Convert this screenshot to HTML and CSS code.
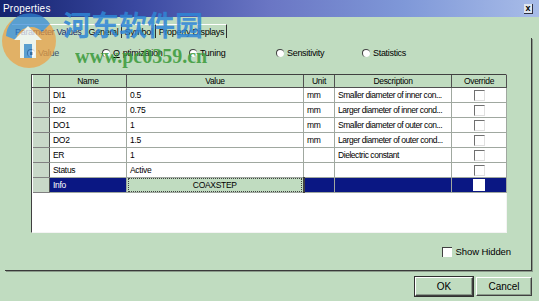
FILE: index.html
```html
<!DOCTYPE html>
<html lang="en">
    <head>
        <meta charset="UTF-8" />
        <title>Properties</title>
        <link rel="stylesheet" href="styles.css">
    </head>
    <body>
        <div class="window">
            <!-- title bar -->
            <div class="titlebar">
                <span class="title">Properties</span>
                <span class="close">x</span>
            </div>

            <!-- tabs -->
            <div class="tabs">
                <span class="tab on">Parameter Values</span>
                <span class="tab">General</span>
                <span class="tab">Symbol</span>
                <span class="tab">Property Displays</span>
            </div>

            <div class="panel">
                <div class="modes">
                    <label class="radio on"><i></i>Value</label>
                    <label class="radio"><i></i><u>O</u>ptimization</label>
                    <label class="radio"><i></i>Tuning</label>
                    <label class="radio"><i></i>Sensitivity</label>
                    <label class="radio"><i></i>Statistics</label>
                </div>

                <div class="gridbox">
                    <table class="grid">
                        <colgroup>
                            <col style="width:17px">
                            <col style="width:77px">
                            <col style="width:177px">
                            <col style="width:31px">
                            <col style="width:117px">
                            <col style="width:55px">
                        </colgroup>
                        <thead>
                            <tr>
                                <th></th>
                                <th>Name</th>
                                <th>Value</th>
                                <th>Unit</th>
                                <th>Description</th>
                                <th>Override</th>
                            </tr>
                        </thead>
                        <tbody>
                            <tr>
                                <th></th>
                                <td>DI1</td>
                                <td>0.5</td>
                                <td>mm</td>
                                <td class="desc">Smaller diameter of inner con...</td>
                                <td class="ovr"><span class="box"></span></td>
                            </tr>
                            <tr>
                                <th></th>
                                <td>DI2</td>
                                <td>0.75</td>
                                <td>mm</td>
                                <td class="desc">Larger diameter of inner cond...</td>
                                <td class="ovr"><span class="box"></span></td>
                            </tr>
                            <tr>
                                <th></th>
                                <td>DO1</td>
                                <td>1</td>
                                <td>mm</td>
                                <td class="desc">Smaller diameter of outer con...</td>
                                <td class="ovr"><span class="box"></span></td>
                            </tr>
                            <tr>
                                <th></th>
                                <td>DO2</td>
                                <td>1.5</td>
                                <td>mm</td>
                                <td class="desc">Larger diameter of outer cond...</td>
                                <td class="ovr"><span class="box"></span></td>
                            </tr>
                            <tr>
                                <th></th>
                                <td>ER</td>
                                <td>1</td>
                                <td></td>
                                <td class="desc">Dielectric constant</td>
                                <td class="ovr"><span class="box"></span></td>
                            </tr>
                            <tr>
                                <th></th>
                                <td>Status</td>
                                <td>Active</td>
                                <td></td>
                                <td></td>
                                <td class="ovr"><span class="box"></span></td>
                            </tr>
                            <tr class="sel">
                                <th></th>
                                <td>Info</td>
                                <td class="cellbtn"><span>COAXSTEP</span></td>
                                <td></td>
                                <td></td>
                                <td class="ovr"><span class="box"></span></td>
                            </tr>
                        </tbody>
                    </table>
                </div>

                <div class="hiddenrow">
                    <label class="check"><i></i>Show Hidden</label>
                </div>
            </div>

            <div class="buttons">
                <button class="btn def">OK</button>
                <button class="btn">Cancel</button>
            </div>

            <!-- watermark over the dialog -->
            <div class="mark">
                <svg class="logo" width="60" height="60" viewBox="0 0 60 60">
                    <circle cx="29" cy="31" r="27" fill="#f0a040"/>
                    <path d="M6 26 A24 24 0 0 1 50 14 L42 22 A15 15 0 0 0 16 30 Z" fill="#2f86d6"/>
                    <path d="M20 48 L20 30 L14 30 L28 16 L42 30 L36 30 L36 48 Z" fill="#fff"/>
                    <path d="M24 48 L24 34 L32 34 L32 48 Z" fill="#2f86d6"/>
                </svg>
                <span class="cn">河东软件园</span>
                <span class="url">www.pc0359.cn</span>
            </div>
        </div>
    </body>
</html>
```

FILE: styles.css
```css
html,
body {
    margin: 0;
    padding: 0;
}
body {
    font-family: "Liberation Sans", Arial, sans-serif;
    font-size: 9px;
    color: #000;
}

/* dialog */
.window {
    position: relative;
    width: 539px;
    height: 301px;
    overflow: hidden;
    background: #c0dcc0;
}

/* title bar */
.titlebar {
    display: flex;
    align-items: center;
    justify-content: space-between;
    height: 17px;
    padding: 0 6px 0 3px;
    box-sizing: border-box;
    background: linear-gradient(90deg, #14236e 0%, #3a48a0 25%, #6a76c4 50%, #7f98d8 75%, #a8bce8 100%);
}
.title {
    color: #fff;
    font-size: 10px;
    letter-spacing: .2px;
}
.close {
    width: 8px;
    height: 9px;
    line-height: 8px;
    text-align: center;
    font-size: 9px;
    font-weight: bold;
    background: #dfe6f0;
    border-right: 1px solid #303040;
    border-bottom: 1px solid #303040;
}

/* tabs */
.tabs {
    display: flex;
    height: 14px;
    margin-top: 7px;
    padding-left: 12px;
    font-size: 9px;
    letter-spacing: -.3px;
}
.tab {
    padding: 2px 2px 0 3px;
    border-right: 1px solid #303030;
    border-top: 1px solid #fff;
}
.tab.on {
    padding-right: 4px;
    border-right: 0;
    color: #1a2a6a;
}

/* tab page */
.panel {
    height: 233px;
    margin-left: 5px;
    width: 527px;
    box-sizing: border-box;
    border-right: 1px solid #3a3a3a;
    border-bottom: 1px solid #3a3a3a;
    box-shadow: 1px 1px 0 #8a9a8a;
    display: flex;
    flex-direction: column;
}

/* radio row */
.modes {
    display: grid;
    grid-template-columns: 75px 87px 87px 86px auto;
    align-items: center;
    height: 12px;
    margin-top: 9px;
    padding-left: 22px;
    letter-spacing: -.3px;
}
.radio {
    display: flex;
    align-items: center;
    gap: 3px;
}
.radio u {
    text-decoration: underline;
}
.radio i {
    display: block;
    width: 8px;
    height: 8px;
    border-radius: 50%;
    background: #fff;
    border-top: 1px solid #404040;
    border-left: 1px solid #404040;
    box-sizing: border-box;
}
.radio.on {
    color: #405060;
}
.radio.on i {
    background: radial-gradient(circle, #303030 30%, #f4f4f4 36%);
}

/* grid */
.gridbox {
    width: 476px;
    height: 159px;
    margin: 15px 0 0 26px;
    box-sizing: border-box;
    background: #fff;
    border-top: 1px solid #404040;
    border-left: 1px solid #404040;
    border-bottom: 1px solid #f4f4f4;
    border-right: 1px solid #f4f4f4;
}
.grid {
    table-layout: fixed;
    width: 474px;
    border-collapse: collapse;
    font-size: 8.5px;
    letter-spacing: -.3px;
}
.grid th,
.grid td {
    padding: 0 3px;
    height: 14px;
    white-space: nowrap;
    overflow: hidden;
    font-weight: normal;
    text-align: left;
    border: 1px solid #a0a8a0;
}
.grid td.desc {
    padding: 0 1px 0 3px;
    letter-spacing: -.45px;
}
.grid thead th {
    height: 12px;
    text-align: center;
    background: #c0dcc0;
    border-top: 0;
    border-left: 1px solid #fff;
    border-right: 1px solid #505050;
    border-bottom: 1px solid #505050;
}
.grid tbody th {
    background: #c8d8c8;
    border-left: 0;
    border-top: 1px solid #f4f4f4;
    border-right: 1px solid #505050;
    border-bottom: 1px solid #808080;
}
.grid .ovr {
    text-align: center;
    padding: 0;
}
.box {
    display: inline-block;
    vertical-align: middle;
    width: 11px;
    height: 11px;
    box-sizing: border-box;
    background: #fff;
    border-top: 1px solid #707070;
    border-left: 1px solid #707070;
    border-bottom: 1px solid #e0e0e0;
    border-right: 1px solid #e0e0e0;
}

/* selected row */
.grid .sel td {
    background: #0a1783;
    color: #fff;
}
.grid .sel td.cellbtn {
    padding: 0;
    background: #c0dcc0;
    color: #000;
    border-right: 2px solid #404040;
    text-align: center;
}
.cellbtn span {
    display: block;
    height: 12px;
    line-height: 12px;
    margin: 0 1px;
    border: 1px dotted #404040;
}
.grid .sel .box {
    border: 0;
    width: 12px;
    height: 12px;
}

/* show hidden */
.hiddenrow {
    display: flex;
    justify-content: flex-end;
    margin-top: 13px;
    padding-right: 20px;
}
.check {
    display: flex;
    align-items: center;
    gap: 4px;
    font-size: 9.5px;
    letter-spacing: -.1px;
}
.check i {
    display: block;
    width: 10px;
    height: 10px;
    box-sizing: border-box;
    background: #fff;
    border-top: 1px solid #404040;
    border-left: 1px solid #404040;
}

/* buttons */
.buttons {
    display: flex;
    justify-content: flex-end;
    gap: 3px;
    margin-top: 6px;
    padding-right: 7px;
}
.btn {
    width: 56px;
    height: 19px;
    padding: 0;
    font-family: inherit;
    font-size: 10px;
    background: #c0dcc0;
    border: 1px solid;
    border-color: #fff #404040 #404040 #fff;
    box-shadow: inset -1px -1px 0 #8a9a8a;
}
.btn.def {
    width: 58px;
    outline: 1px solid #303030;
}

/* watermark */
.mark {
    position: absolute;
    left: 0;
    top: 10px;
    width: 210px;
    height: 60px;
    pointer-events: none;
}
.logo {
    position: absolute;
    left: 0;
    top: 0;
    opacity: .7;
}
.cn {
    position: absolute;
    left: 63px;
    top: -6px;
    font-family: "Noto Sans CJK SC", sans-serif;
    font-size: 28px;
    font-weight: bold;
    color: #2f86d6;
    opacity: .85;
}
.url {
    position: absolute;
    left: 75px;
    top: 35px;
    font-family: "Liberation Serif", serif;
    font-size: 20px;
    font-weight: bold;
    color: #3a9a3a;
    opacity: .85;
}
```
